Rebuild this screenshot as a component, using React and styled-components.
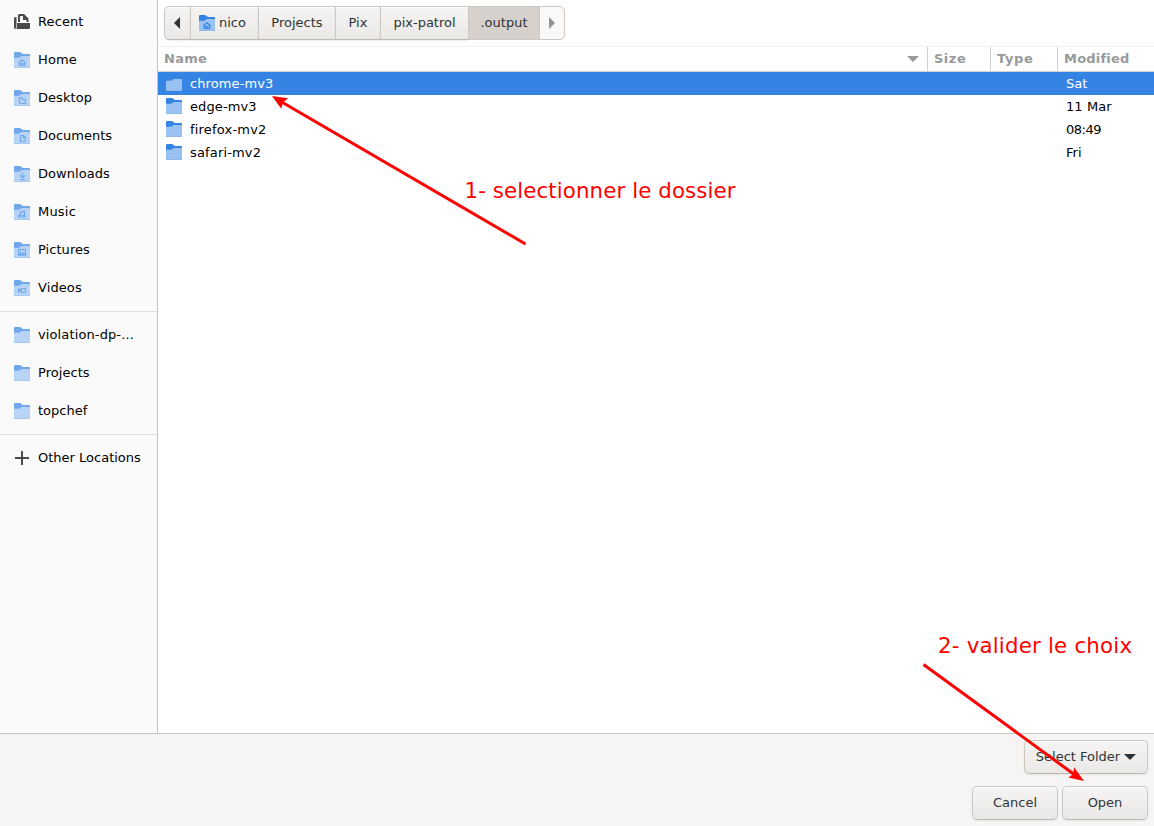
import React from "react";
import styled, { createGlobalStyle, css } from "styled-components";

const Global = createGlobalStyle`
  * { box-sizing: border-box; }
  html, body { margin: 0; padding: 0; }
  body {
    font-family: "DejaVu Sans", sans-serif;
    font-size: 13px;
    color: #000;
    background: #fff;
    overflow: hidden;
  }
`;

const Dialog = styled.div`
  position: relative;
  width: 1154px;
  height: 826px;
  display: flex;
  flex-direction: column;
  background: #fff;
`;

const Main = styled.div`
  display: flex;
  height: 733px;
`;

const Sidebar = styled.nav`
  width: 158px;
  flex: none;
  padding-top: 3px;
  background: #fafafa;
  border-right: 1px solid #c3c1bd;
`;

const Place = styled.div`
  display: flex;
  align-items: center;
  gap: 8px;
  height: 38px;
  padding: 0 14px;
  white-space: nowrap;
`;

const PlaceName = styled.span`
  line-height: 16px;
  padding-bottom: 1px;
  letter-spacing: ${(p) => p.$spacing || 0}px;
`;

const Separator = styled.div`
  height: 1px;
  margin: 4px 0;
  background: #dfdfde;
`;

const Content = styled.section`
  flex: 1;
  display: flex;
  flex-direction: column;
`;

const Toolbar = styled.div`
  height: 46px;
  padding: 6px;
  display: flex;
`;

const raised = css`
  color: #2e3436;
  background: linear-gradient(to bottom, #f5f4f3 0%, #edecea 70%, #e9e8e6 100%);
  border: 1px solid #cdc7c2;
  border-bottom-color: #bfb8b1;
  box-shadow: inset 0 1px #fbfbfa, 0 1px 2px rgba(0, 0, 0, 0.07);
`;

const PathBar = styled.div`
  display: flex;
  height: 34px;
`;

const PathButton = styled.button`
  ${raised}
  display: flex;
  align-items: center;
  justify-content: center;
  gap: 4px;
  width: ${(p) => p.$width}px;
  height: 34px;
  padding: 0 0 2px;
  font: inherit;
  border-right-width: 0;
  &:first-child {
    padding: 0 2px 0 0;
    border-radius: 5px 0 0 5px;
  }
  &:last-child {
    padding-bottom: 0;
    border-right-width: 1px;
    border-radius: 0 5px 5px 0;
  }
  ${(p) =>
    p.$state === "current" &&
    css`
      background: #d6d1cd;
      border-bottom-color: #cdc7c2;
      box-shadow: none;
    `}
  ${(p) =>
    p.$state === "disabled" &&
    css`
      background: #faf9f8;
      border-bottom-color: #cdc7c2;
      box-shadow: none;
    `}
`;

const HomeButton = styled(PathButton)`
  justify-content: flex-start;
  padding-left: 8px;
  & > svg {
    margin-top: 2px;
  }
`;

const columns = css`
  display: grid;
  grid-template-columns: 770px 63px 67px 1fr;
`;

const HeaderRow = styled.div`
  ${columns}
  height: 26px;
  border-top: 1px solid #f1f0ef;
  border-bottom: 1px solid #d5d0cc;
`;

const HeaderCell = styled.div`
  display: flex;
  align-items: center;
  justify-content: space-between;
  padding: 0 8px 1px 6px;
  color: #979a9b;
  font-weight: bold;
  letter-spacing: ${(p) => p.$spacing || 0.3}px;
  border-right: ${(p) => (p.$last ? "none" : "1px solid #d5d0cc")};
`;

const FileRow = styled.div`
  ${columns}
  height: 23px;
  color: ${(p) => (p.$selected ? "#fff" : "#000")};
  background: ${(p) => (p.$selected ? "#3584e4" : "transparent")};
`;

const FileCell = styled.div`
  display: flex;
  align-items: center;
  gap: 8px;
  padding-left: 8px;
  letter-spacing: ${(p) => p.$spacing || 0}px;
  & > svg {
    margin-bottom: 1px;
  }
`;

const Footer = styled.footer`
  height: 93px;
  padding: 6px 6px 0;
  display: flex;
  flex-direction: column;
  align-items: flex-end;
  gap: 12px;
  background: #f6f5f4;
  border-top: 1px solid #c8c6c2;
`;

const Actions = styled.div`
  display: flex;
  gap: 4px;
`;

const Button = styled.button`
  ${raised}
  display: flex;
  align-items: center;
  justify-content: center;
  gap: 4px;
  width: ${(p) => p.$width}px;
  height: 34px;
  padding: 0 0 2px;
  font: inherit;
  border-radius: 5px;
  & > svg {
    margin-top: 2px;
  }
`;

const Icon = styled.svg`
  display: block;
  flex: none;
`;

const Arrows = styled.svg`
  position: absolute;
  inset: 0;
  pointer-events: none;
`;

const Note = styled.div`
  position: absolute;
  left: ${(p) => p.$x}px;
  top: ${(p) => p.$y}px;
  color: #f00;
  font-size: 21.33px;
  letter-spacing: ${(p) => p.$spacing}px;
  line-height: 26px;
  white-space: nowrap;
`;

const emblems = {
  home: <path d="M4.3 11.2 8 7.8l3.7 3.4M5.5 10.8v2.7h1.7v-2h1.6v2h1.7v-2.7" />,
  desktop: <path d="M5.5 7.5h2.7v2h3.3v4h-6z" />,
  documents: <path d="M6.5 7.5h3l2 2v4h-5zM9.3 7.5v2.2h2" />,
  downloads: <path d="M8.5 6.5v5M6 9.3l2.5 2.4L11 9.3M6 13.5h5" />,
  music: (
    <>
      <path d="M6.5 12V8l4-.8V12" />
      <circle cx="5.6" cy="12.2" r="1.1" />
      <circle cx="9.6" cy="12.2" r="1.1" />
    </>
  ),
  pictures: (
    <>
      <path d="M4.5 7.5h7v5.6h-7z" />
      <path d="M5 12.8v-1l1.6-1.5 1.2 1.2L9.3 10l2 2v.8z" fill="currentColor" stroke="none" />
      <circle cx="6.5" cy="9.2" r=".6" fill="currentColor" stroke="none" />
    </>
  ),
  videos: (
    <>
      <path d="M7.5 8.5h4v4h-4z" />
      <path d="M4 8l2.6 1.6v1.8L4 13z" fill="currentColor" stroke="none" />
    </>
  ),
};

function Folder({ emblem, faded, selected }) {
  const back = faded ? "#70a8ec" : "#3584e4";
  const front = faded ? "#b7d3f6" : "#99c1f1";
  return (
    <Icon width="16" height="16" viewBox="0 0 16 16" fill="none">
      {!selected && <path d="M0 16V1q0-1 1-1h4.800q.9 0 1.500.7l.9.8q.6.5 1.300.5H15q1 0 1 1v13z" fill={back} />}
      <path d="M0 16V6.500q0-.7.8-.7h3.600q.9 0 1.500-.6l.9-.7q.6-.5 1.500-.5H15q1 0 1 1v11z" fill={front} />
      <path d="M0 15h16v1H0z" fill={faded ? "#a9c7ec" : "#8eb8ea"} />
      {emblem && (
        <g stroke={back} color={back} strokeWidth="1.1">
          {emblems[emblem]}
        </g>
      )}
    </Icon>
  );
}

function RecentIcon() {
  return (
    <Icon width="16" height="16" viewBox="0 0 16 16">
      <path d="M1.500 3H2.500v6L1.700 15H1.500Q0 15 0 13.500v-9Q0 3 1.500 3z" fill="#4a4a4a" />
      <path d="M4 8V1.500Q4 0 5.500 0H10l4.500 4.500V8H12.500V6H9V2H6v6z" fill="#4a4a4a" />
      <path d="M3 9h13v4.500q0 1.500-1.500 1.500h-12z" fill="#4a4a4a" />
    </Icon>
  );
}

function PlusIcon() {
  return (
    <Icon width="16" height="16" viewBox="0 0 16 16">
      <path d="M7 1h2v6h6v2H9v6H7V9H1V7h6z" fill="#4a4a4a" />
    </Icon>
  );
}

function Triangle({ dir, color = "#2e3436" }) {
  if (dir === "down")
    return (
      <Icon width="12" height="6" viewBox="0 0 12 6">
        <path d="M0 0h12L6 6z" fill={color} />
      </Icon>
    );
  return (
    <Icon width="6" height="12" viewBox="0 0 6 12">
      <path d={dir === "left" ? "M6 0v12L0 6z" : "M0 0v12l6-6z"} fill={color} />
    </Icon>
  );
}

const places = [
  ["Home", "home", 0.1],
  ["Desktop", "desktop", 0.05],
  ["Documents", "documents", 0],
  ["Downloads", "downloads", 0.05],
  ["Music", "music", 0.2],
  ["Pictures", "pictures", 0.05],
  ["Videos", "videos", 0.1],
];
const bookmarks = [
  ["violation-dp-...", 0.12],
  ["Projects", 0.05],
  ["topchef", 0],
];
const files = [
  ["chrome-mv3", "Sat", 0.1],
  ["edge-mv3", "11 Mar", 0.1, 0.1],
  ["firefox-mv2", "08:49", 0.2, -0.5],
  ["safari-mv2", "Fri", 0.15],
];

export default function App() {
  return (
    <>
      <Global />
      <Dialog>
        <Main>
          <Sidebar>
            <Place>
              <RecentIcon />
              <PlaceName $spacing={0.1}>Recent</PlaceName>
            </Place>
            {places.map(([name, emblem, spacing]) => (
              <Place key={name}>
                <Folder faded emblem={emblem} />
                <PlaceName $spacing={spacing}>{name}</PlaceName>
              </Place>
            ))}
            <Separator />
            {bookmarks.map(([name, spacing]) => (
              <Place key={name}>
                <Folder faded />
                <PlaceName $spacing={spacing}>{name}</PlaceName>
              </Place>
            ))}
            <Separator />
            <Place>
              <PlusIcon />
              <PlaceName>Other Locations</PlaceName>
            </Place>
          </Sidebar>
          <Content>
            <Toolbar>
              <PathBar>
                <PathButton $width={26} aria-label="Back"><Triangle dir="left" /></PathButton>
                <HomeButton $width={68}>
                  <Folder emblem="home" />
                  nico
                </HomeButton>
                <PathButton $width={77}>Projects</PathButton>
                <PathButton $width={45}>Pix</PathButton>
                <PathButton $width={88}>pix-patrol</PathButton>
                <PathButton $width={71} $state="current">.output</PathButton>
                <PathButton $width={26} $state="disabled" aria-label="Forward">
                  <Triangle dir="right" color="#929595" />
                </PathButton>
              </PathBar>
            </Toolbar>
            <HeaderRow>
              <HeaderCell>
                Name
                <Triangle dir="down" color="#979a9b" />
              </HeaderCell>
              <HeaderCell $spacing={0.5}>Size</HeaderCell>
              <HeaderCell $spacing={0.6}>Type</HeaderCell>
              <HeaderCell $last $spacing={0.2}>Modified</HeaderCell>
            </HeaderRow>
            {files.map(([name, modified, nameSpacing, dateSpacing], i) => (
              <FileRow key={name} $selected={i === 0}>
                <FileCell $spacing={nameSpacing}>
                  <Folder selected={i === 0} />
                  {name}
                </FileCell>
                <FileCell />
                <FileCell />
                <FileCell $spacing={dateSpacing}>{modified}</FileCell>
              </FileRow>
            ))}
          </Content>
        </Main>
        <Footer>
          <Button $width={124}>
            Select Folder
            <Triangle dir="down" />
          </Button>
          <Actions>
            <Button $width={86}>Cancel</Button>
            <Button $width={86}>Open</Button>
          </Actions>
        </Footer>
        <Arrows width="1154" height="826" viewBox="0 0 1154 826">
          <g stroke="#f00" strokeWidth="3" fill="none">
            <path d="M525.5 244 280 101" />
            <path d="M923.5 664.5 1077 776.5" />
          </g>
          <g fill="#f00">
            <path d="M272 96 288 98.200 283 102.500 281.300 108.800z" />
            <path d="M1084 781 1068.300 777.500 1073.500 774 1074 767.300z" />
          </g>
        </Arrows>
        <Note $x={464.5} $y={177.5} $spacing={0.1}>1- selectionner le dossier</Note>
        <Note $x={938} $y={632.5} $spacing={0.2}>2- valider le choix</Note>
      </Dialog>
    </>
  );
}
